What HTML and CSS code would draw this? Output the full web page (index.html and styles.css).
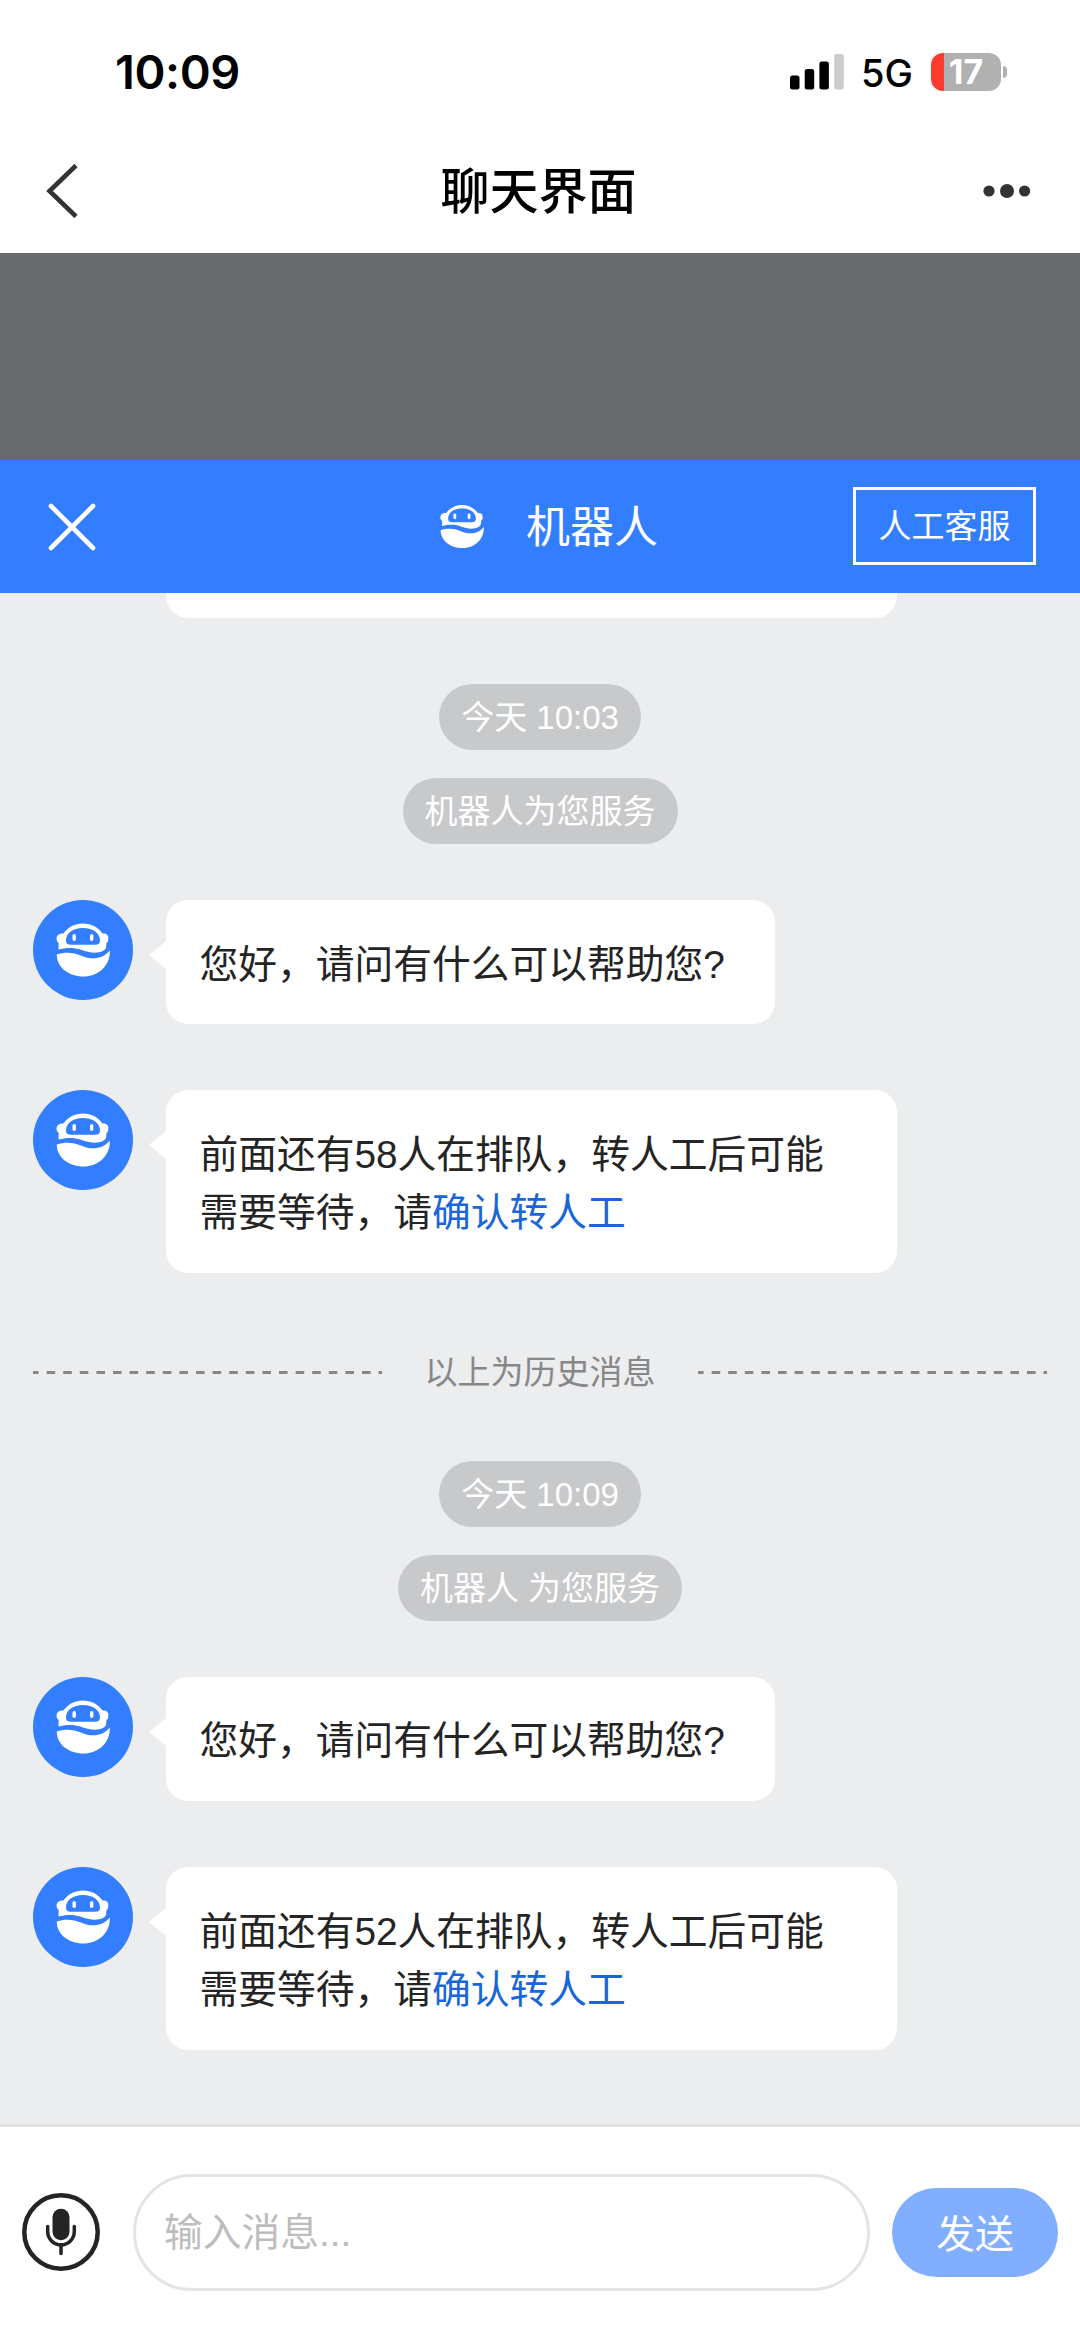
FILE: index.html
```
<!DOCTYPE html>
<html lang="zh-CN">
<head>
<meta charset="utf-8">
<title>聊天界面</title>
<link rel="stylesheet" href="styles.css">
</head>
<body>
<svg class="defs" width="0" height="0" aria-hidden="true">
  <symbol id="robot" viewBox="0 0 54 54">
    <path fill="currentColor" fill-rule="evenodd" d="M7.500 10.500C12 4 19 .5 27 .5S42 4 46.500 10.500C50 10 52.700 12 52.300 15C52.500 18 51.500 19.500 50.500 20L50 25C48.500 27.500 46.500 28.700 43 29.300C37 30.300 31 29 25 26.800C17 24 9 24.800 2.500 26.500L2.700 20C.5 19 .2 16 .8 13.800C1.500 11.300 4.500 10 7.500 10.500ZM27 5C17 5 10 10 10 17.500C10 20.500 11.500 21.800 15 21.800H39C42.500 21.800 44 20.500 44 17.500C44 10 37 5 27 5Z"/>
    <rect fill="currentColor" x="16.500" y="11" width="3.400" height="7" rx="1.700"/>
    <rect fill="currentColor" x="34" y="11" width="3.400" height="7" rx="1.700"/>
    <path fill="currentColor" d="M.8 31.500C9 28.500 18 29.500 25 32.500C36 37.500 47 36 53.800 27.500C54.500 43 42 53.500 27.500 53.500C12 53.500 .5 43.500 .8 31.500Z"/>
  </symbol>
</svg>
<div class="screen">
  <header class="status">
    <span class="time">10:09</span>
    <div class="indicators">
      <svg class="signal" viewBox="0 0 54 36"><rect x="0" y="21.500" width="9.500" height="14" rx="2.500"/><rect x="14.700" y="15" width="9.500" height="20.500" rx="2.500"/><rect x="29.400" y="7.500" width="9.500" height="28" rx="2.500"/><rect x="44.300" y="0" width="9.500" height="35.500" rx="2.500" fill="#cccccc"/></svg>
      <span class="network">5G</span>
      <div class="battery"><span class="level">17</span></div>
      <i class="nub"></i>
    </div>
  </header>
  <nav class="nav">
    <svg class="back" viewBox="0 0 32 54"><path d="M30 1.500L3.500 27L30 52.500"/></svg>
    <h1>聊天界面</h1>
    <svg class="more" viewBox="0 0 48 16"><circle cx="6" cy="8" r="5.600"/><circle cx="24" cy="8" r="7"/><circle cx="41.600" cy="8" r="5.600"/></svg>
  </nav>
  <div class="backdrop"></div>
  <section class="titlebar">
    <svg class="close" viewBox="0 0 48 48"><path d="M3 3L45 45M45 3L3 45"/></svg>
    <div class="agent"><svg class="bot"><use href="#robot"/></svg><span class="name">机器人</span></div>
    <button class="human">人工客服</button>
  </section>
  <main class="chat">
    <div class="previous"></div>
    <div class="notices"><span class="pill">今天 10:03</span><span class="pill">机器人为您服务</span></div>
    <div class="message">
      <div class="avatar"><svg class="face"><use href="#robot"/></svg></div>
      <p class="bubble short">您好，请问有什么可以帮助您?</p>
    </div>
    <div class="message">
      <div class="avatar"><svg class="face"><use href="#robot"/></svg></div>
      <p class="bubble">前面还有58人在排队，转人工后可能<br>需要等待，请<a>确认转人工</a></p>
    </div>
    <div class="history">
      <svg class="dash"><line x1="0" y1="1.500" x2="349" y2="1.500"/></svg>
      <span>以上为历史消息</span>
      <svg class="dash"><line x1="0" y1="1.500" x2="349" y2="1.500"/></svg>
    </div>
    <div class="notices"><span class="pill">今天 10:09</span><span class="pill">机器人 为您服务</span></div>
    <div class="message">
      <div class="avatar"><svg class="face"><use href="#robot"/></svg></div>
      <p class="bubble short">您好，请问有什么可以帮助您?</p>
    </div>
    <div class="message">
      <div class="avatar"><svg class="face"><use href="#robot"/></svg></div>
      <p class="bubble">前面还有52人在排队，转人工后可能<br>需要等待，请<a>确认转人工</a></p>
    </div>
  </main>
  <footer class="composer">
    <svg class="mic" viewBox="0 0 78 78"><circle cx="39" cy="39" r="36.700"/><rect x="30.500" y="15.700" width="17" height="31.500" rx="8.500"/><path d="M25.700 33.500V38.500A13.300 13.300 0 0 0 52.300 38.500V33.500M39 52V60.500"/></svg>
    <div class="input">输入消息...</div>
    <button class="send">发送</button>
  </footer>
</div>
</body>
</html>
```
FILE: styles.css
```
* { box-sizing: border-box; }
body { margin: 0; background: #fff; font-family: "Liberation Sans", "Noto Sans CJK SC", sans-serif; color: #242424; }
button { font: inherit; margin: 0; padding: 0; }
.defs { position: absolute; }
.screen { width: 1080px; height: 2337px; display: flex; flex-direction: column; overflow: hidden; }

.status { height: 143px; padding: 0 73px 0 115px; display: flex; align-items: center; justify-content: space-between; font-family: Inter, sans-serif; color: #000; }
.time { font-size: 47px; font-weight: 600; line-height: 58px; letter-spacing: -0.4px; padding-top: 1px; }
.indicators { display: flex; align-items: center; }
.signal { width: 54px; height: 36px; margin-right: 17px; }
.network { width: 70px; font-size: 38px; font-weight: 500; line-height: 46px; padding-top: 3px; }
.battery { width: 70px; height: 38px; border-radius: 12px; background: linear-gradient(90deg, #ff3b30 13px, #b1b1b1 13px); display: flex; align-items: center; justify-content: center; }
.level { color: #fff; font-size: 34px; font-weight: 700; line-height: 38px; }
.nub { width: 4px; height: 12px; margin-left: 2px; border-radius: 0 5px 5px 0; background: #b1b1b1; }

.nav { height: 110px; padding: 0 49px 14px 46px; display: grid; grid-template-columns: 48px 1fr 48px; align-items: center; }
.back { width: 32px; height: 54px; fill: none; stroke: #333; stroke-width: 4.600; }
.nav h1 { margin: 0; padding-top: 2px; text-align: center; font-size: 49px; font-weight: 500; line-height: 60px; color: #000; }
.more { width: 48px; height: 16px; fill: #333; }
.backdrop { height: 207px; background: #696a6c; }

.titlebar { height: 133px; padding: 0 44px 0 48px; background: #327eff; display: grid; grid-template-columns: 183px 1fr 183px; align-items: center; color: #fff; }
.close { width: 48px; height: 48px; fill: none; stroke: #fff; stroke-width: 4.600; stroke-linecap: round; }
.agent { display: flex; align-items: center; justify-content: center; gap: 42px; font-size: 44px; line-height: 60px; padding-left: 14px; }
.name { padding-top: 2px; }
.bot { width: 44px; height: 45px; }
.human { height: 78px; margin-bottom: 1px; padding-bottom: 4px; border: 3px solid #fff; background: none; color: #fff; font-size: 33px; }

.chat { height: 1531px; padding: 0 33px; background: #ebedef; display: flex; flex-direction: column; }
.previous { width: 731px; height: 25px; margin-left: 133px; border-radius: 0 0 22px 22px; background: #fff; flex: none; }
.notices { margin-top: 66px; display: flex; flex-direction: column; align-items: center; gap: 28px; }
.pill { height: 66px; padding: 0 22px; border-radius: 33px; background: #c8c9cb; color: #fff; font-size: 33px; line-height: 67px; white-space: nowrap; }
.message { display: flex; align-items: flex-start; gap: 33px; margin-top: 66px; }
.notices + .message { margin-top: 56px; }
.avatar { width: 100px; height: 100px; border-radius: 50%; background: #327eff; color: #fff; display: flex; align-items: center; justify-content: center; flex: none; }
.face { width: 54px; height: 54px; }
.bubble { position: relative; width: 731px; margin: 0; padding: 35.500px 0 30.500px 33.500px; border-radius: 22px; background: #fff; font-size: 38.750px; line-height: 58.300px; white-space: nowrap; }
.bubble.short { width: 609px; }
.bubble::before { content: ""; position: absolute; left: -17px; top: 41px; border: solid transparent; border-width: 14px 17px 14px 0; border-right-color: #fff; }
.bubble a { color: #1a66d9; }
.history { margin-top: 75px; height: 50px; display: flex; align-items: center; justify-content: space-between; font-size: 33px; line-height: 50px; color: #878787; }
.dash { width: 349px; height: 3px; }
.dash line { stroke: #878787; stroke-width: 3; stroke-dasharray: 8.600 8; stroke-dashoffset: 3; }
.history + .notices { margin-top: 63px; }

.composer { height: 213px; padding: 47px 22px; border-top: 3px solid #e1e2e4; background: #fff; display: flex; align-items: center; }
.mic { width: 78px; height: 78px; fill: none; stroke: #242424; stroke-width: 4.500; flex: none; }
.mic rect { fill: #242424; stroke: none; }
.mic path { stroke-width: 3.500; stroke-linecap: round; }
.input { width: 737px; height: 117px; margin-left: 33px; padding-left: 28px; border: 3px solid #e4e4e4; border-radius: 59px; font-size: 38.750px; line-height: 111px; color: #bdbdbd; }
.send { width: 166px; height: 89px; margin-left: 22px; padding-bottom: 3px; border: 0; border-radius: 45px; background: #82aeff; color: #fff; font-size: 38.750px; }
```
